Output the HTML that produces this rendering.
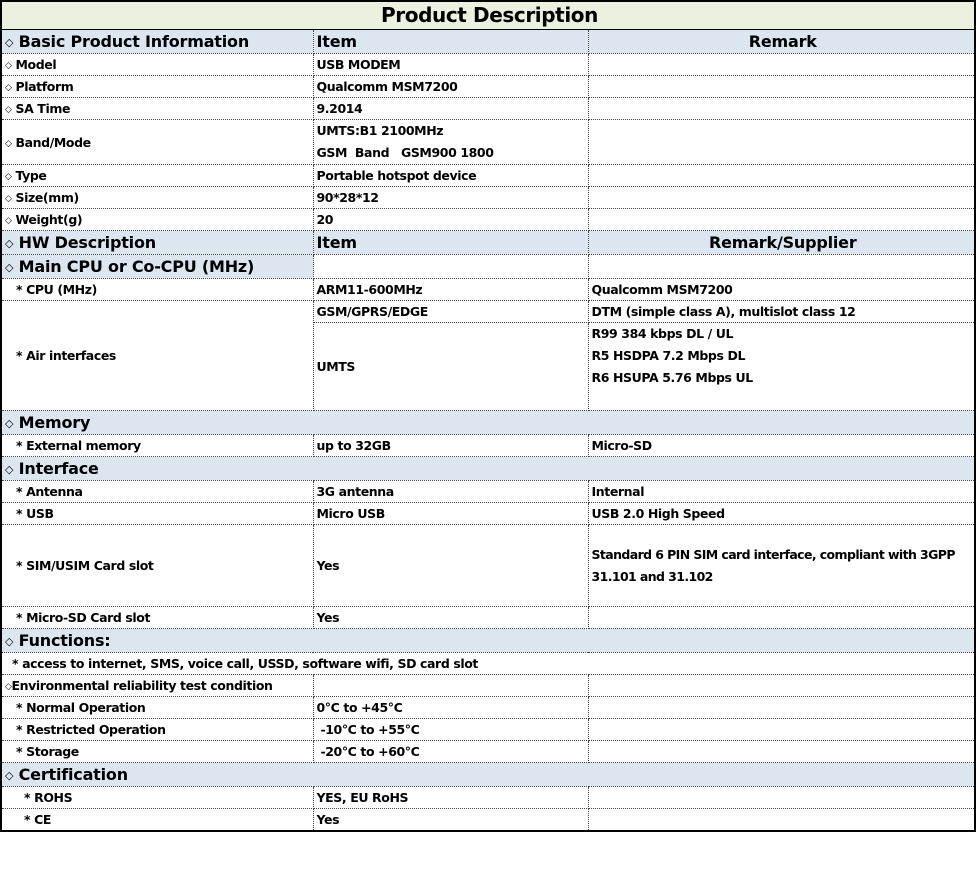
<!DOCTYPE html>
<html><head><meta charset="utf-8"><style>
body{margin:0;background:#fff;font-family:"DejaVu Sans","Liberation Sans",sans-serif;}
table{position:absolute;left:0;top:0;width:976px;border-collapse:collapse;table-layout:fixed;border:2px solid #000;}
td{border:1px dotted #444;padding:0 0 0 3px;font-size:12.5px;font-weight:bold;height:21px;line-height:21px;white-space:nowrap;overflow:hidden;letter-spacing:-0.4px;}
.t td{background:#ebf1de;font-size:20px;text-align:center;height:27px;border-bottom:1px solid #000;}
.h td{background:#dce6f1;font-size:16px;height:23px;letter-spacing:-0.2px;}
.c{text-align:center;}
.i{padding-left:14px;}
.ml{line-height:22px;}
.d{font-size:9px;line-height:0;position:relative;top:-1px;}
.h .d{font-size:11px;}
</style></head><body>
<table>
<col style="width:312px"><col style="width:275px"><col>
<tr class="t"><td colspan="3">Product Description</td></tr>
<tr class="h"><td><span class="d">◇</span> Basic Product Information</td><td>Item</td><td class="c">Remark</td></tr>
<tr><td><span class="d">◇</span> Model</td><td>USB MODEM</td><td></td></tr>
<tr><td><span class="d">◇</span> Platform</td><td>Qualcomm MSM7200</td><td></td></tr>
<tr><td><span class="d">◇</span> SA Time</td><td>9.2014</td><td></td></tr>
<tr><td style="height:43px"><span class="d">◇</span> Band/Mode</td><td class="ml">UMTS:B1 2100MHz<br>GSM&nbsp; Band&nbsp;&nbsp; GSM900 1800</td><td></td></tr>
<tr><td><span class="d">◇</span> Type</td><td>Portable hotspot device</td><td></td></tr>
<tr><td><span class="d">◇</span> Size(mm)</td><td>90*28*12</td><td></td></tr>
<tr><td><span class="d">◇</span> Weight(g)</td><td>20</td><td></td></tr>
<tr class="h"><td><span class="d">◇</span> HW Description</td><td>Item</td><td class="c">Remark/Supplier</td></tr>
<tr class="h"><td><span class="d">◇</span> Main CPU or Co-CPU (MHz)</td><td style="background:#fff"></td><td style="background:#fff"></td></tr>
<tr><td class="i">* CPU (MHz)</td><td>ARM11-600MHz</td><td>Qualcomm MSM7200</td></tr>
<tr><td class="i" rowspan="2">* Air interfaces</td><td>GSM/GPRS/EDGE</td><td>DTM (simple class A), multislot class 12</td></tr>
<tr><td style="height:87px">UMTS</td><td class="ml" style="vertical-align:top">R99 384 kbps DL / UL<br>R5 HSDPA 7.2 Mbps DL<br>R6 HSUPA 5.76 Mbps UL</td></tr>
<tr class="h"><td colspan="3"><span class="d">◇</span> Memory</td></tr>
<tr><td class="i">* External memory</td><td>up to 32GB</td><td>Micro-SD</td></tr>
<tr class="h"><td colspan="3"><span class="d">◇</span> Interface</td></tr>
<tr><td class="i">* Antenna</td><td>3G antenna</td><td>Internal</td></tr>
<tr><td class="i">* USB</td><td>Micro USB</td><td>USB 2.0 High Speed</td></tr>
<tr><td class="i" style="height:81px">* SIM/USIM Card slot</td><td>Yes</td><td class="ml" style="letter-spacing:-0.6px">Standard 6 PIN SIM card interface, compliant with 3GPP<br>31.101 and 31.102</td></tr>
<tr><td class="i">* Micro-SD Card slot</td><td>Yes</td><td></td></tr>
<tr class="h"><td colspan="3"><span class="d">◇</span> Functions:</td></tr>
<tr><td colspan="3" style="padding-left:10px">* access to internet, SMS, voice call, USSD, software wifi, SD card slot</td></tr>
<tr><td><span class="d">◇</span>Environmental reliability test condition</td><td></td><td></td></tr>
<tr><td class="i">* Normal Operation</td><td>0°C to +45°C</td><td></td></tr>
<tr><td class="i">* Restricted Operation</td><td>&nbsp;-10°C to +55°C</td><td></td></tr>
<tr><td class="i">* Storage</td><td>&nbsp;-20°C to +60°C</td><td></td></tr>
<tr class="h"><td colspan="3"><span class="d">◇</span> Certification</td></tr>
<tr><td style="padding-left:22px">* ROHS</td><td>YES, EU RoHS</td><td></td></tr>
<tr><td style="padding-left:22px">* CE</td><td>Yes</td><td></td></tr>
</table>
</body></html>
